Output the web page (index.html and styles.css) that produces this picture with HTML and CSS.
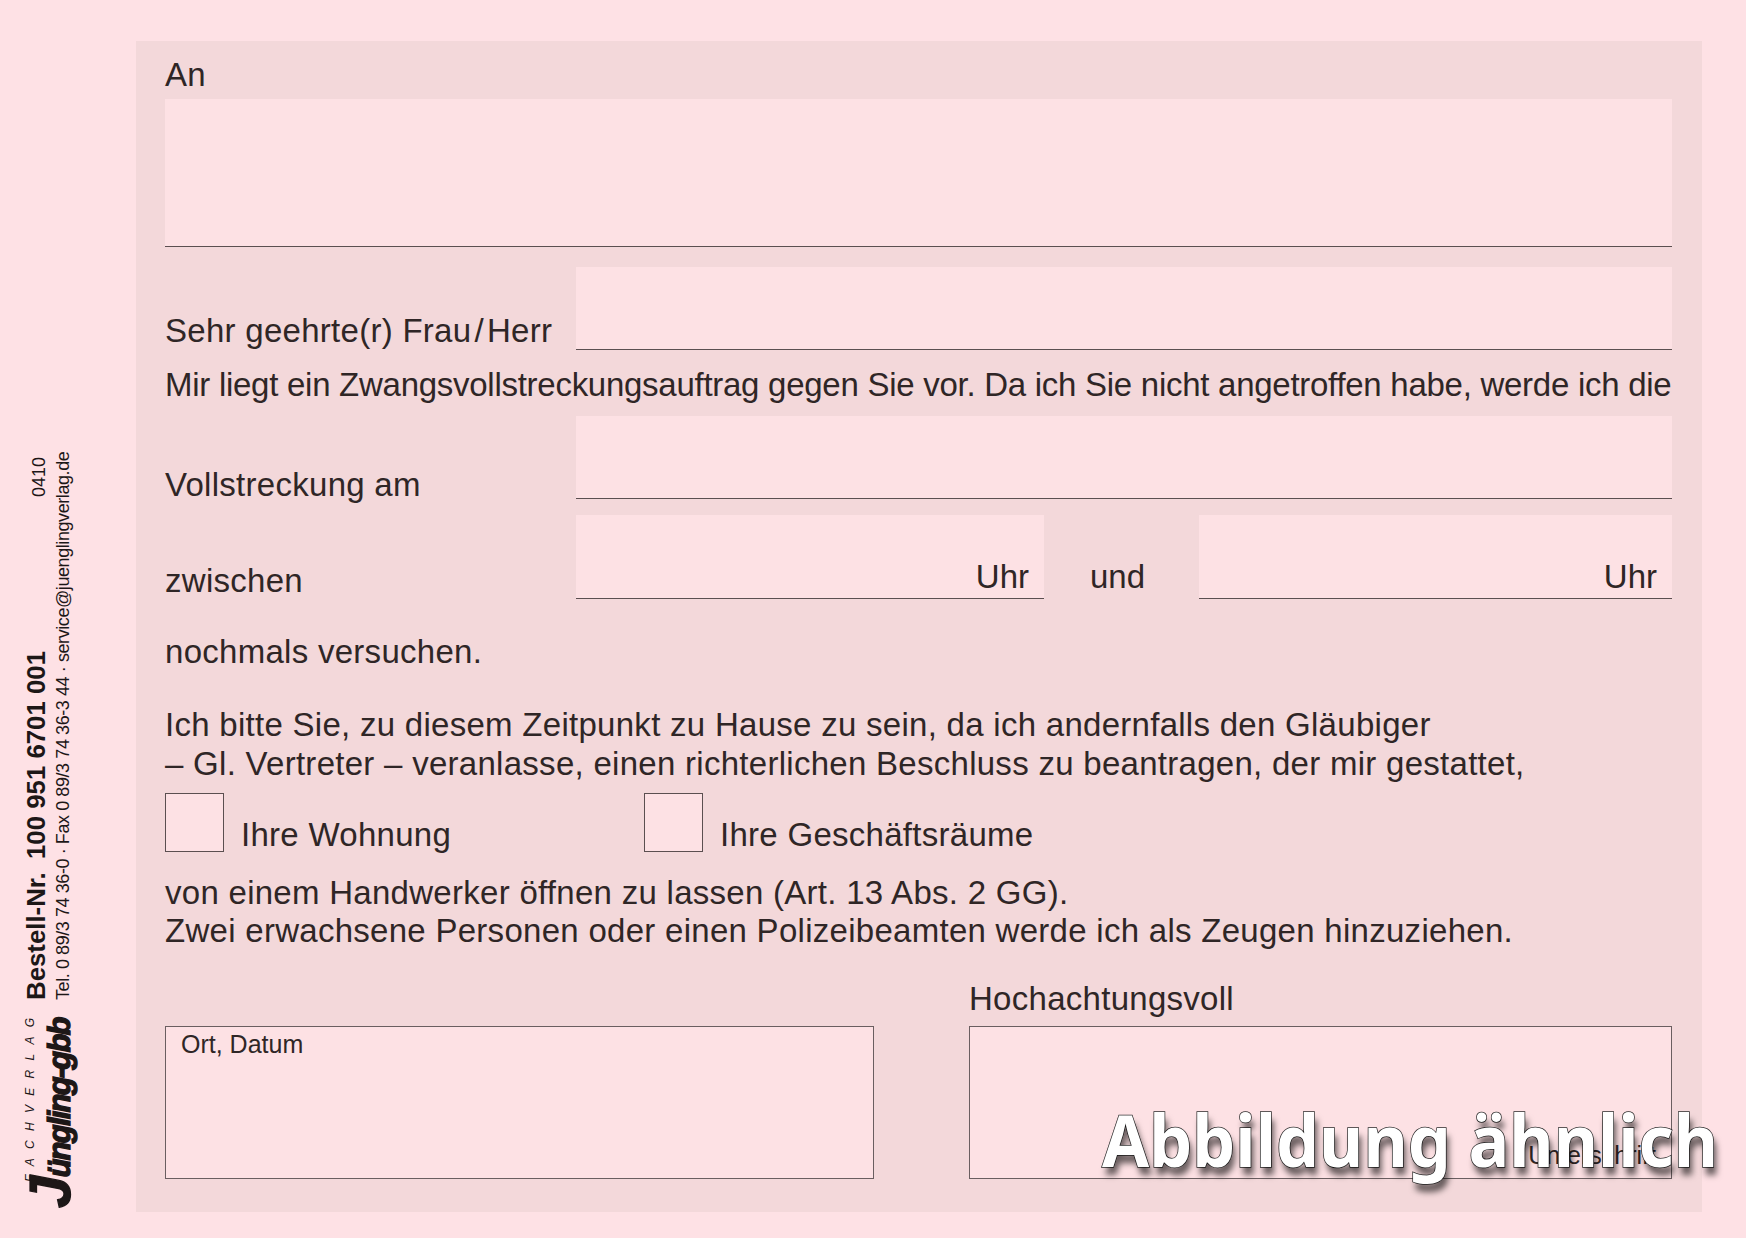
FILE: index.html
```html
<!DOCTYPE html>
<html lang="de">
<head>
<meta charset="utf-8">
<title>Benachrichtigung</title>
<link rel="stylesheet" href="styles.css">
</head>
<body>
<div class="page">
  <aside class="side">
    <div class="side-inner">
      <div class="logo">
        <div class="logo-top">FACHVERLAG</div>
        <div class="logo-name"><span class="logo-j">J</span>üngling-gbb</div>
      </div>
      <div class="imprint">
        <div class="imprint-top">
          <span class="order">Bestell-Nr.<span class="order-no">100 951 6701 001</span></span>
          <span class="code">0410</span>
        </div>
        <div class="contact">Tel. 0 89/3 74 36-0 · Fax 0 89/3 74 36-3 44 · service@juenglingverlag.de</div>
      </div>
    </div>
  </aside>
  <main class="panel">
    <div class="line">An</div>
    <div class="field field-address"></div>
    <div class="row row-salute">
      <div class="line">Sehr geehrte(r) Frau&#8202;/&#8202;Herr</div>
      <div class="field field-row"></div>
    </div>
    <div class="line notice">Mir liegt ein Zwangsvollstreckungsauftrag gegen Sie vor. Da ich Sie nicht angetroffen habe, werde ich die</div>
    <div class="row row-date">
      <div class="line tight">Vollstreckung am</div>
      <div class="field field-row"></div>
    </div>
    <div class="row row-time">
      <div class="line mid">zwischen</div>
      <div class="field field-time"><span class="line">Uhr</span></div>
      <div class="line und">und</div>
      <div class="field field-time"><span class="line">Uhr</span></div>
    </div>
    <div class="line again">nochmals versuchen.</div>
    <div class="line para please">
      Ich bitte Sie, zu diesem Zeitpunkt zu Hause zu sein, da ich andernfalls den Gläubiger<br>
      – Gl. Vertreter – veranlasse, einen richterlichen Beschluss zu beantragen, der mir gestattet,
    </div>
    <div class="checks">
      <div class="check check-home"><span class="box"></span><span class="line tight">Ihre Wohnung</span></div>
      <div class="check"><span class="box"></span><span class="line tight">Ihre Geschäftsräume</span></div>
    </div>
    <div class="line witness">von einem Handwerker öffnen zu lassen (Art. 13 Abs. 2 GG).<br>Zwei erwachsene Personen oder einen Polizeibeamten werde ich als Zeugen hinzuziehen.</div>
    <div class="sign">
      <div class="sign-left">
        <div class="sign-box"><span class="small">Ort, Datum</span></div>
      </div>
      <div class="sign-right">
        <div class="line closing">Hochachtungsvoll</div>
        <div class="sign-box sign-box-end"><span class="small">Unterschrift</span></div>
      </div>
    </div>
  </main>
  <div class="stamp">Abbildung ähnlich</div>
</div>
</body>
</html>
```
FILE: styles.css
```css
* { box-sizing: border-box; }
html, body { margin: 0; padding: 0; }
body {
  background: #fee1e5;
  color: #2f2626;
  font-family: "Liberation Sans", Arial, sans-serif;
  overflow: hidden;
}
.page {
  position: relative;
  display: flex;
  width: 1746px;
  height: 1238px;
}
.side {
  flex: 0 0 136px;
  height: 1238px;
  writing-mode: vertical-rl;
  text-orientation: sideways;
  transform: rotate(180deg);
}
.side-inner {
  display: flex;
  align-items: flex-start;
  padding-block-start: 24px;
  padding-inline-start: 30px;
  gap: 15px;
  color: #1d1717;
}
.logo {
  inline-size: 193px;
  flex: none;
  font-style: italic;
}
.logo-top {
  font-size: 12px;
  line-height: 13px;
  letter-spacing: 9.3px;
  padding-inline-start: 26px;
  white-space: nowrap;
}
.logo-name {
  font-size: 31px;
  line-height: 34px;
  font-weight: 700;
  letter-spacing: -1.8px;
  white-space: nowrap;
  margin-block-start: 3px;
  -webkit-text-stroke: 1.3px #1d1717;
}
.logo-j {
  font-size: 58px;
  line-height: 20px;
}
.imprint { inline-size: 546px; flex: none; margin-block-start: -2px; }
.imprint-top {
  display: flex;
  justify-content: space-between;
  align-items: baseline;
  line-height: 29px;
}
.order {
  font-size: 25.8px;
  font-weight: 700;
  white-space: nowrap;
}
.order-no { margin-inline-start: 13px; }
.code { font-size: 18px; margin-inline-end: 3px; }
.contact {
  font-size: 18px;
  line-height: 22px;
  letter-spacing: -0.42px;
  margin-block-start: -2px;
  white-space: nowrap;
}
.panel {
  flex: 0 0 1566px;
  height: 1171px;
  margin-top: 41px;
  padding: 15px 30px 0 29px;
  background: #f3d8da;
}
.line {
  font-size: 33px;
  line-height: 38px;
  letter-spacing: 0.28px;
  white-space: nowrap;
}
.line.tight { line-height: 28px; }
.line.mid { line-height: 36px; }
.field { background: #fde1e4; border-bottom: 1px solid #5b4f50; }
.field-address { height: 148px; margin-top: 5px; }
.row { display: grid; align-items: end; }
.row-salute { grid-template-columns: 411px 1fr; margin-top: 20px; }
.row-date { grid-template-columns: 411px 1fr; margin-top: 12px; }
.row-time { grid-template-columns: 411px 468px 155px 1fr; margin-top: 16px; }
.field-row { height: 83px; }
.line.notice { margin-top: 16px; letter-spacing: -0.27px; }
.field-time {
  height: 84px;
  display: flex;
  justify-content: flex-end;
  align-items: flex-end;
  padding: 0 15px 2px 0;
}
.field-time .line { letter-spacing: 0; }
.line.und { padding: 0 0 3px 46px; letter-spacing: 0; }
.again { margin-top: 34px; }
.line.para { line-height: 39px; }
.please { margin-top: 34px; }
.checks { display: flex; margin-top: 10px; }
.check { display: flex; align-items: flex-end; gap: 17px; }
.check-home { width: 479px; }
.box {
  width: 59px;
  height: 59px;
  background: #fde1e4;
  border: 1px solid #5b4f50;
}
.check .line { padding-bottom: 3px; }
.witness { margin-top: 22px; }
.sign {
  display: grid;
  grid-template-columns: 709px 1fr;
  column-gap: 95px;
  align-items: end;
  margin-top: 30px;
}
.closing { margin-bottom: 8px; }
.sign-box {
  height: 153px;
  padding: 2px 15px;
  background: #fde1e4;
  border: 1px solid #6a5e60;
}
.sign-box-end {
  display: flex;
  justify-content: flex-end;
  align-items: flex-end;
  padding: 0 15px 8px;
}
.small { font-size: 25px; line-height: 30px; }
.stamp {
  position: absolute;
  left: 1102px;
  top: 1091px;
  font-family: "Noto Sans", sans-serif;
  font-weight: 700;
  font-size: 71px;
  line-height: 97px;
  color: #fff;
  white-space: nowrap;
  -webkit-text-stroke: 1.5px #2a2a2a;
  paint-order: stroke fill;
  text-shadow: 3px 8px 6px rgba(0, 0, 0, 0.6);
  transform: scaleX(0.96);
  transform-origin: left center;
}
```
